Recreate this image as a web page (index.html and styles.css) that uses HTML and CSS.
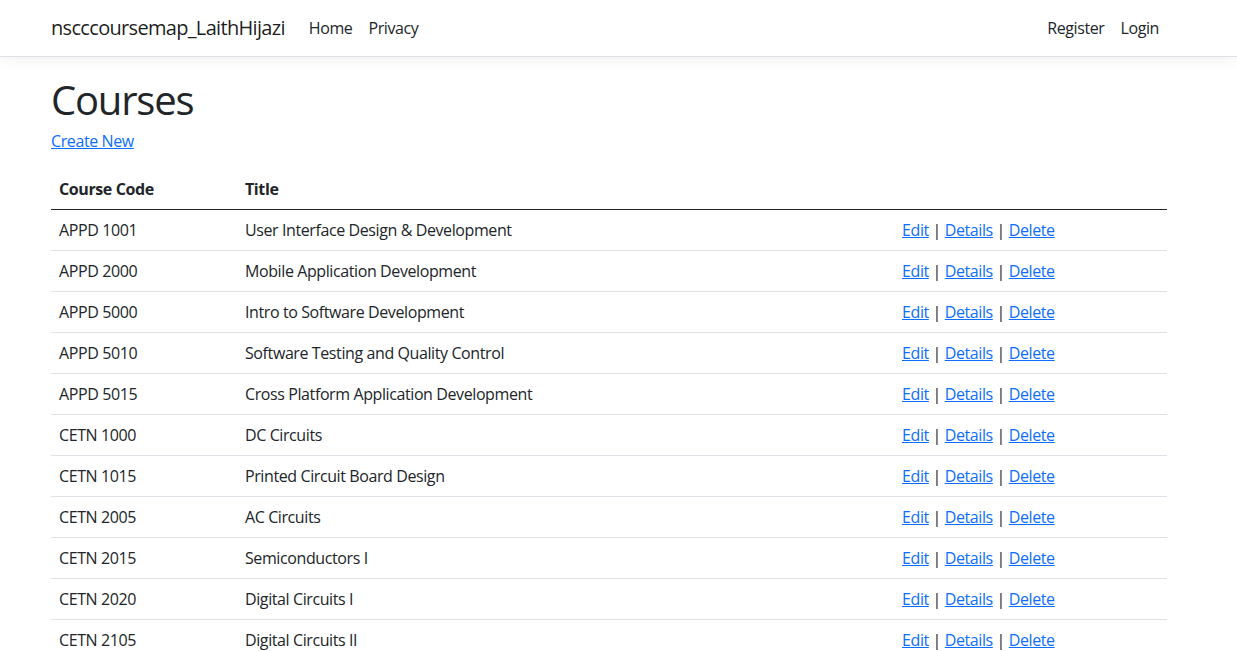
FILE: index.html
```html
<!DOCTYPE html>
<html lang="en">
<head>
<meta charset="utf-8">
<title>Index - nscccoursemap_LaithHijazi</title>
<link rel="stylesheet" href="styles.css">
</head>
<body>
<header class="navbar">
  <div class="container nav-inner">
    <a class="brand" href="#">nscccoursemap_LaithHijazi</a>
    <ul class="nav-list grow">
      <li><a class="nav-link" href="#">Home</a></li>
      <li><a class="nav-link" href="#">Privacy</a></li>
    </ul>
    <ul class="nav-list">
      <li><a class="nav-link" href="#">Register</a></li>
      <li><a class="nav-link" href="#">Login</a></li>
    </ul>
  </div>
</header>
<div class="container">
  <main class="main">
    <h1 class="title">Courses</h1>
    <p class="create"><a href="#">Create New</a></p>
    <table class="table">
      <thead>
        <tr><th class="c-code">Course Code</th><th class="c-title">Title</th><th></th></tr>
      </thead>
      <tbody>
        <tr><td>APPD 1001</td><td>User Interface Design &amp; Development</td><td><a href="#">Edit</a> | <a href="#">Details</a> | <a href="#">Delete</a></td></tr>
        <tr><td>APPD 2000</td><td>Mobile Application Development</td><td><a href="#">Edit</a> | <a href="#">Details</a> | <a href="#">Delete</a></td></tr>
        <tr><td>APPD 5000</td><td>Intro to Software Development</td><td><a href="#">Edit</a> | <a href="#">Details</a> | <a href="#">Delete</a></td></tr>
        <tr><td>APPD 5010</td><td>Software Testing and Quality Control</td><td><a href="#">Edit</a> | <a href="#">Details</a> | <a href="#">Delete</a></td></tr>
        <tr><td>APPD 5015</td><td>Cross Platform Application Development</td><td><a href="#">Edit</a> | <a href="#">Details</a> | <a href="#">Delete</a></td></tr>
        <tr><td>CETN 1000</td><td>DC Circuits</td><td><a href="#">Edit</a> | <a href="#">Details</a> | <a href="#">Delete</a></td></tr>
        <tr><td>CETN 1015</td><td>Printed Circuit Board Design</td><td><a href="#">Edit</a> | <a href="#">Details</a> | <a href="#">Delete</a></td></tr>
        <tr><td>CETN 2005</td><td>AC Circuits</td><td><a href="#">Edit</a> | <a href="#">Details</a> | <a href="#">Delete</a></td></tr>
        <tr><td>CETN 2015</td><td>Semiconductors I</td><td><a href="#">Edit</a> | <a href="#">Details</a> | <a href="#">Delete</a></td></tr>
        <tr><td>CETN 2020</td><td>Digital Circuits I</td><td><a href="#">Edit</a> | <a href="#">Details</a> | <a href="#">Delete</a></td></tr>
        <tr><td>CETN 2105</td><td>Digital Circuits II</td><td><a href="#">Edit</a> | <a href="#">Details</a> | <a href="#">Delete</a></td></tr>
      </tbody>
    </table>
  </main>
</div>
</body>
</html>
```
FILE: styles.css
```css
* { box-sizing: border-box; }
html, body { margin: 0; padding: 0; }
body {
  font-family: "Open Sans", "Noto Sans", "Liberation Sans", sans-serif;
  font-size: 16px;
  line-height: 1.5;
  letter-spacing: -0.025em;
  color: #212529;
  background: #fff;
  overflow: hidden;
}
a { color: #0d6efd; text-decoration: underline; }
.container {
  width: 1140px;
  padding: 0 12px;
  margin-left: 39px;
}
.navbar {
  padding: 8px 0;
  background: #fff;
  border-bottom: 1px solid #dee2e6;
  box-shadow: 0 4px 12px rgba(0,0,0,.05);
  margin-bottom: 16px;
}
.nav-inner { display: flex; align-items: center; }
.brand {
  font-size: 20px;
  line-height: 30px;
  padding: 5px 0;
  margin-right: 16px;
  letter-spacing: -0.034em;
  color: rgba(0,0,0,.9);
  text-decoration: none;
  white-space: nowrap;
}
.nav-list { display: flex; list-style: none; margin: 0; padding: 0; }
.grow { flex: 1; }
.nav-link {
  display: block;
  padding: 8px;
  color: #212529;
  text-decoration: none;
}
.main { padding-bottom: 16px; }
.title {
  font-size: 40px;
  font-weight: 500;
  line-height: 1.2;
  letter-spacing: -0.03em;
  padding-top: 3px;
  margin: 0 0 5px;
}
.create { margin: 0 0 16px; }
.table {
  width: 100%;
  border-collapse: collapse;
  table-layout: fixed;
}
.table th, .table td {
  padding: 8px;
  text-align: left;
  vertical-align: top;
  border-bottom: 1px solid #dee2e6;
}
.table th { font-weight: 700; border-bottom: 1px solid #212529; }
.c-code { width: 186px; }
.c-title { width: 657px; }
```
